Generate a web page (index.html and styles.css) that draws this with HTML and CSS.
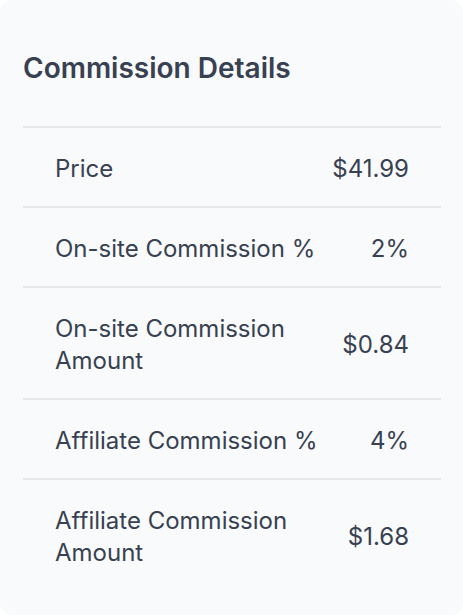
FILE: index.html
```html
<!DOCTYPE html>
<html>
<head>
<meta charset="utf-8">
<link rel="stylesheet" href="styles.css">
</head>
<body>
<section class="card">
  <h2 class="title">Commission Details</h2>
  <div class="list">
    <div class="row"><div class="label">Price</div><div class="value">$41.99</div></div>
    <div class="row"><div class="label">On-site Commission %</div><div class="value">2%</div></div>
    <div class="row"><div class="label">On-site Commission Amount</div><div class="value">$0.84</div></div>
    <div class="row"><div class="label">Affiliate Commission %</div><div class="value">4%</div></div>
    <div class="row"><div class="label">Affiliate Commission Amount</div><div class="value">$1.68</div></div>
  </div>
</section>
</body>
</html>
```
FILE: styles.css
```css
html, body {
  margin: 0;
  padding: 0;
  background: #ffffff;
}
body {
  font-family: Inter, "Noto Sans", sans-serif;
  color: #374151;
}
.card {
  box-sizing: border-box;
  width: 463px;
  height: 615px;
  background: #f9fafb;
  border-radius: 12px;
  padding: 48px 22px 0 23px;
}
.title {
  margin: 0;
  font-size: 28px;
  line-height: 40px;
  font-weight: 600;
  color: #374151;
  padding-bottom: 38px;
}
.list {
  border-top: 2px solid #e5e7eb;
}
.row {
  display: flex;
  align-items: center;
  justify-content: space-between;
  gap: 24px;
  padding: 25px 32px 21px 32px;
  border-bottom: 2px solid #e5e7eb;
  font-size: 24px;
  line-height: 32px;
}
.row:last-child {
  border-bottom: none;
}
.label {
  max-width: 272px;
}
.value {
  text-align: right;
  white-space: nowrap;
}
```
